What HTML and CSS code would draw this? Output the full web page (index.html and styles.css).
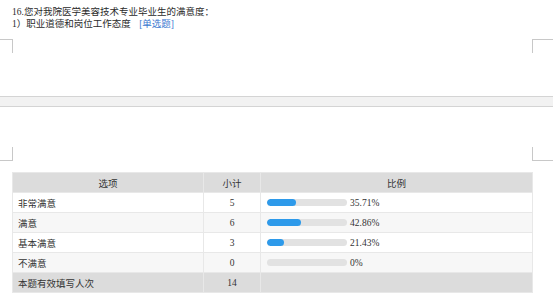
FILE: index.html
```html
<!DOCTYPE html>
<html lang="zh">
<head>
<meta charset="utf-8">
<link rel="stylesheet" href="styles.css">
</head>
<body>
<div class="question">
  <div class="q-title">16.您对我院医学美容技术专业毕业生的满意度：</div>
  <div class="q-sub">1）职业道德和岗位工作态度 <span class="q-type">[单选题]</span></div>
</div>
<div class="page-foot">
  <span class="mark mark-bl"></span>
  <span class="mark mark-br"></span>
</div>
<div class="page-gap"></div>
<div class="page-head">
  <span class="mark mark-tl"></span>
  <span class="mark mark-tr"></span>
</div>
<table class="stats">
  <colgroup>
    <col class="c-opt"><col class="c-cnt"><col class="c-pct">
  </colgroup>
  <thead>
    <tr><th>选项</th><th>小计</th><th>比例</th></tr>
  </thead>
  <tbody>
    <tr><td class="opt">非常满意</td><td class="cnt">5</td><td class="pct"><div class="pct-wrap"><span class="bar"><span class="fill" style="width:35.71%"></span></span><span class="pct-val">35.71%</span></div></td></tr>
    <tr class="alt"><td class="opt">满意</td><td class="cnt">6</td><td class="pct"><div class="pct-wrap"><span class="bar"><span class="fill" style="width:42.86%"></span></span><span class="pct-val">42.86%</span></div></td></tr>
    <tr><td class="opt">基本满意</td><td class="cnt">3</td><td class="pct"><div class="pct-wrap"><span class="bar"><span class="fill" style="width:21.43%"></span></span><span class="pct-val">21.43%</span></div></td></tr>
    <tr class="alt"><td class="opt">不满意</td><td class="cnt">0</td><td class="pct"><div class="pct-wrap"><span class="bar"><span class="fill" style="width:0%"></span></span><span class="pct-val">0%</span></div></td></tr>
  </tbody>
  <tfoot>
    <tr><td class="opt">本题有效填写人次</td><td class="cnt">14</td><td></td></tr>
  </tfoot>
</table>
</body>
</html>
```
FILE: styles.css
```css
html, body {
  margin: 0;
  padding: 0;
  background: #ffffff;
}
body {
  width: 553px;
  font-family: "Liberation Serif", "Noto Sans CJK SC", serif;
  color: #333333;
}
.question {
  padding: 6px 0 0 12px;
  font-size: 9.5px;
  line-height: 12px;
  color: #2a2a2a;
}
.q-type {
  color: #3a78d0;
  margin-left: 6px;
}
.page-foot {
  margin-top: 9px;
  height: 57px;
  display: flex;
  justify-content: space-between;
  align-items: flex-start;
}
.page-head {
  height: 54px;
  display: flex;
  justify-content: space-between;
  align-items: flex-end;
}
.mark {
  display: block;
  height: 14px;
  box-sizing: border-box;
  border-color: #c8c8c8;
  border-style: solid;
  border-width: 0;
}
.mark-bl {
  width: 13px;
  border-top-width: 1px;
  border-right-width: 1px;
}
.mark-br {
  width: 21px;
  border-top-width: 1px;
  border-left-width: 1px;
}
.mark-tl {
  width: 13px;
  border-bottom-width: 1px;
  border-right-width: 1px;
}
.mark-tr {
  width: 21px;
  border-bottom-width: 1px;
  border-left-width: 1px;
}
.page-gap {
  height: 9px;
  background: #f2f2f2;
  border-top: 1px solid #d4d4d4;
  border-bottom: 1px solid #d4d4d4;
}
.stats {
  margin: 11px 0 0 12px;
  width: 520px;
  border-collapse: collapse;
  table-layout: fixed;
  font-size: 9.5px;
}
.c-opt { width: 191px; }
.c-cnt { width: 57px; }
.c-pct { width: 272px; }
.stats th,
.stats td {
  height: 20px;
  padding: 0;
  box-sizing: border-box;
  border: 1px solid #e8e8e8;
  vertical-align: middle;
}
.stats th {
  background: #dcdcdc;
  font-weight: normal;
  text-align: center;
  color: #333333;
}
.stats tbody tr { background: #ffffff; }
.stats tbody tr.alt { background: #f7f7f7; }
.stats tfoot tr { background: #dcdcdc; }
.opt {
  text-align: left;
  padding-left: 5px !important;
}
.cnt {
  text-align: center;
}
.pct {
  padding-left: 6px !important;
}
.pct-wrap {
  display: flex;
  align-items: center;
  gap: 3px;
}
.bar {
  display: block;
  width: 80px;
  height: 7px;
  border-radius: 4px;
  background: #e2e2e2;
  overflow: hidden;
}
.fill {
  display: block;
  height: 100%;
  background: #2e9aea;
  border-radius: 4px;
}
```
